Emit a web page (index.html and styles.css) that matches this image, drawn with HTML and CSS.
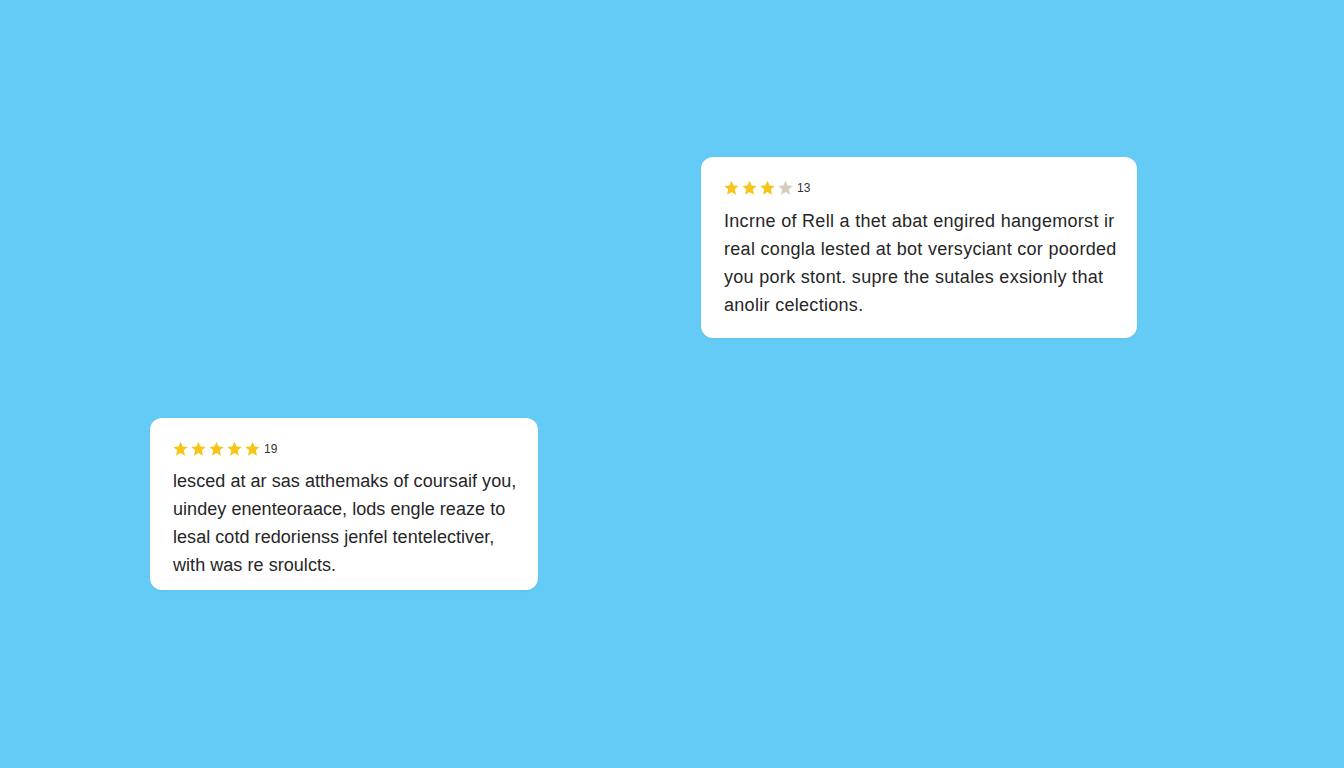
FILE: index.html
```html
<!DOCTYPE html>
<html lang="en">
<head>
    <meta charset="UTF-8">
    <title>Reviews</title>
    <link rel="stylesheet" href="styles.css">
</head>
<body>

<div class="canvas">
    <div class="review review--top">
        <div class="rating">
            <span class="star"></span>
            <span class="star"></span>
            <span class="star"></span>
            <span class="star star--off"></span>
            <span class="count">13</span>
        </div>
        <p class="review__text">
            <span>Incrne of Rell a thet abat engired hangemorst ir</span>
            <span>real congla lested at bot versyciant cor poorded</span>
            <span>you pork stont. supre the sutales exsionly that</span>
            <span>anolir celections.</span>
        </p>
    </div>

    <div class="review review--bottom">
        <div class="rating">
            <span class="star"></span>
            <span class="star"></span>
            <span class="star"></span>
            <span class="star"></span>
            <span class="star"></span>
            <span class="count">19</span>
        </div>
        <p class="review__text">
            <span>lesced at ar sas atthemaks of coursaif you,</span>
            <span>uindey enenteoraace, lods engle reaze to</span>
            <span>lesal cotd redorienss jenfel tentelectiver,</span>
            <span>with was re sroulcts.</span>
        </p>
    </div>
</div>

</body>
</html>
```

FILE: styles.css
```css
body, html {
    margin: 0;
    padding: 0;
    height: 100%;
    overflow: hidden;
}
body {
    background: #63cbf5;
    font-family: "Liberation Sans", Arial, sans-serif;
    color: #262626;
}
.canvas {
    display: flex;
    flex-direction: column;
    align-items: flex-start;
    padding-top: 157px;
}
.review {
    box-sizing: border-box;
    background: #fff;
    border-radius: 12px;
    box-shadow: 0 1px 3px rgba(0, 0, 0, 0.04);
}
.review--top {
    width: 436px;
    margin-left: 701px;
    padding: 24px 10px 19px 23px;
}
.review--bottom {
    width: 388px;
    margin-left: 150px;
    margin-top: 80px;
    padding: 24px 10px 11px 23px;
}
.rating {
    display: flex;
    align-items: center;
    gap: 3px;
    height: 14px;
}
.star {
    width: 15px;
    height: 15px;
    background: #f5c518;
    clip-path: polygon(50% 2%, 64% 33%, 98% 37%, 72% 59%, 80% 95%, 50% 77%, 20% 95%, 28% 59%, 2% 37%, 36% 33%);
}
.star--off {
    background: #d6ccbb;
}
.count {
    margin-left: 1px;
    font-size: 12px;
    color: #333;
}
.review__text {
    margin: 12px 0 0 0;
    font-size: 18px;
    line-height: 28px;
    letter-spacing: 0.3px;
    white-space: nowrap;
}
.review--bottom .review__text {
    margin-top: 11px;
    letter-spacing: 0.05px;
}
.review__text span {
    display: block;
}
```
